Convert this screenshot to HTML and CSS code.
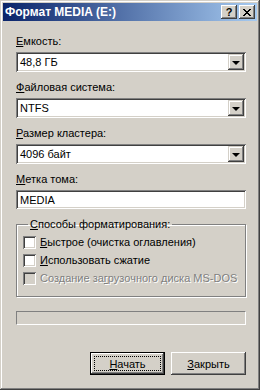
FILE: index.html
```html
<!DOCTYPE html>
<html lang="ru">
<head>
  <meta charset="UTF-8">
  <title>Формат MEDIA (E:)</title>
  <link rel="stylesheet" href="styles.css">
</head>
<body>
  <div class="window">
    <div class="titlebar">
      <span class="title">Формат MEDIA (E:)</span>
      <div class="title-buttons">
        <span class="tbtn help">?</span>
        <span class="tbtn close">
          <svg width="8" height="7" viewBox="0 0 8 7"><path d="M0 0L7 7M1 0L8 7M7 0L0 7M8 0L1 7" stroke="#000" stroke-width="1"/></svg>
        </span>
      </div>
    </div>

    <div class="content">
      <div class="field">
        <label><u>Е</u>мкость:</label>
        <div class="combo"><span class="value">48,8 ГБ</span><span class="arrow"></span></div>
      </div>
      <div class="field">
        <label><u>Ф</u>айловая система:</label>
        <div class="combo"><span class="value">NTFS</span><span class="arrow"></span></div>
      </div>
      <div class="field">
        <label><u>Р</u>азмер кластера:</label>
        <div class="combo"><span class="value">4096 байт</span><span class="arrow"></span></div>
      </div>
      <div class="field">
        <label><u>М</u>етка тома:</label>
        <div class="textbox">MEDIA</div>
      </div>

      <fieldset class="group">
        <legend><u>С</u>пособы форматирования:</legend>
        <div class="check"><span class="box"></span><span><u>Б</u>ыстрое (очистка оглавления)</span></div>
        <div class="check"><span class="box"></span><span><u>И</u>спользовать сжатие</span></div>
        <div class="check disabled"><span class="box"></span><span>Создание за<u>г</u>рузочного диска MS-DOS</span></div>
      </fieldset>

      <div class="progress"></div>

      <div class="buttons">
        <button class="default"><span class="focus"><u>Н</u>ачать</span></button>
        <button><u>З</u>акрыть</button>
      </div>
    </div>
  </div>
</body>
</html>
```

FILE: styles.css
```css
body {
  margin: 0;
  background: #fff;
  font-family: "Liberation Sans", Arial, sans-serif;
  font-size: 11px;
  color: #000;
}
u {
  text-decoration: underline;
  text-underline-offset: 1px;
}
.window {
  width: 260px;
  height: 390px;
  box-sizing: border-box;
  padding: 3px;
  background: #d4d0c8;
  box-shadow: inset -1px -1px #404040, inset 1px 1px #d4d0c8,
              inset -2px -2px #808080, inset 2px 2px #fff;
}
.titlebar {
  height: 18px;
  display: flex;
  align-items: center;
  justify-content: space-between;
  padding: 0 2px;
  background: linear-gradient(to right, #0a246a, #a6caf0);
}
.title {
  color: #fff;
  font-weight: bold;
  font-size: 12px;
}
.title-buttons {
  display: flex;
  gap: 2px;
}
.tbtn {
  width: 16px;
  height: 14px;
  box-sizing: border-box;
  display: flex;
  align-items: center;
  justify-content: center;
  background: #d4d0c8;
  box-shadow: inset -1px -1px #404040, inset 1px 1px #fff,
              inset -2px -2px #808080;
  font-weight: bold;
  font-size: 11px;
}
.content {
  padding: 14px 11px 0 13px;
}
.field {
  display: flex;
  flex-direction: column;
  gap: 4px;
  margin-bottom: 9px;
}
.field label {
  line-height: 13px;
}
.combo, .textbox {
  height: 20px;
  box-sizing: border-box;
  background: #fff;
  display: flex;
  align-items: center;
  padding: 2px 2px 2px 4px;
  box-shadow: inset 1px 1px #808080, inset -1px -1px #fff,
              inset 2px 2px #404040, inset -2px -2px #d4d0c8;
}
.textbox {
  height: 19px;
}
.combo .value {
  flex: 1;
}
.arrow {
  width: 16px;
  height: 16px;
  box-sizing: border-box;
  background: #d4d0c8;
  box-shadow: inset -1px -1px #404040, inset 1px 1px #d4d0c8,
              inset -2px -2px #808080, inset 2px 2px #fff;
  display: flex;
  align-items: center;
  justify-content: center;
}
.arrow::after {
  content: "";
  border-left: 4px solid transparent;
  border-right: 4px solid transparent;
  border-top: 4px solid #000;
  margin-top: 1px;
}
.group {
  margin: 5px 0 0;
  padding: 5px 6px 11px;
  border: 1px solid #808080;
  box-shadow: 1px 1px #fff, inset 1px 1px #fff;
  display: flex;
  flex-direction: column;
  gap: 5px;
}
.group legend {
  padding: 0 2px;
  margin-left: 5px;
  line-height: 13px;
}
.check {
  display: flex;
  align-items: center;
  gap: 4px;
  line-height: 13px;
}
.check .box {
  width: 13px;
  height: 13px;
  box-sizing: border-box;
  background: #fff;
  box-shadow: inset 1px 1px #808080, inset -1px -1px #fff,
              inset 2px 2px #404040, inset -2px -2px #d4d0c8;
}
.check.disabled {
  color: #808080;
  text-shadow: 1px 1px #fff;
}
.check.disabled .box {
  background: #d4d0c8;
}
.progress {
  height: 14px;
  margin-top: 14px;
  box-sizing: border-box;
  border: 1px solid;
  border-color: #808080 #fff #fff #808080;
}
.buttons {
  display: flex;
  justify-content: flex-end;
  gap: 6px;
  margin-top: 27px;
}
button {
  width: 75px;
  height: 23px;
  padding: 0;
  border: none;
  background: #d4d0c8;
  font-family: inherit;
  font-size: 11px;
  color: #000;
  box-shadow: inset -1px -1px #404040, inset 1px 1px #fff,
              inset -2px -2px #808080, inset 2px 2px #d4d0c8;
}
button.default {
  box-shadow: inset 0 0 0 1px #000, inset -2px -2px #404040,
              inset 2px 2px #fff, inset -3px -3px #808080;
  padding: 4px;
}
.focus {
  display: flex;
  align-items: center;
  justify-content: center;
  height: 100%;
  border: 1px dotted #000;
  box-sizing: border-box;
}
```
